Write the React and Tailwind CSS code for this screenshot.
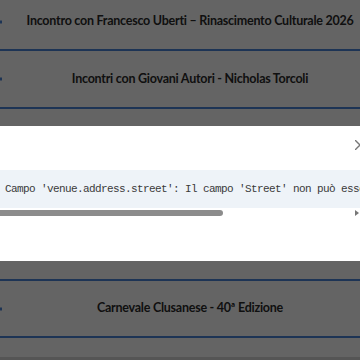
const events = [
  { title: 'Incontro con Francesco Uberti – Rinascimento Culturale 2026', h: 'h-[57px]' },
  { title: 'Incontri con Giovani Autori - Nicholas Torcoli', h: 'h-[58px]' },
  { title: 'Mostra fotografica - Il Lago e la sua Gente', h: 'h-[57px]' },
  { title: 'Concerto di Primavera - Banda Cittadina', h: 'h-[58px]' },
  { title: 'Festa della Sardina - Edizione 2026', h: 'h-[57px]' },
  { title: 'Carnevale Clusanese - 40ª Edizione', h: 'h-[57px]' },
];

function EventRow({ title, h }) {
  return (
    <div className={`relative flex items-center justify-center border-b-2 border-[#4a82d4] pl-[20px] ${h}`}>
      <span className="absolute left-0 top-1/2 h-[3px] w-[2px] -translate-y-1/2 bg-[#4a82d4]"></span>
      <span className="whitespace-nowrap text-[12.5px] font-bold tracking-[-0.25px] text-[#2a2a2a]">{title}</span>
    </div>
  );
}

export default function App() {
  return (
    <div className="relative h-[360px] w-[360px] overflow-hidden bg-[#fafafa]" style={{ fontFamily: 'Lato, "Noto Sans", sans-serif' }}>
      {/* Event list */}
      <div className="-mt-[6px]">
        {events.map((ev) => (
          <EventRow key={ev.title} title={ev.title} h={ev.h} />
        ))}
        <div className="h-[19px]"></div>
        <div className="h-[4px] bg-[#d4d4d4]"></div>
      </div>

      {/* Overlay */}
      <div className="absolute inset-0 bg-black/60"></div>

      {/* Error dialog */}
      <div className="absolute left-0 top-[126px] h-[135px] w-[400px] bg-white">
        <button className="absolute left-[355px] top-[14px] h-[10px] w-[10px] text-[#777]">
          <svg viewBox="0 0 10 10" className="h-[10px] w-[10px]" fill="none" stroke="currentColor" strokeWidth="1.4">
            <path d="M0 0L10 10M0 10L10 0" />
          </svg>
        </button>
        <div className="mt-[44px] flex h-[38px] w-[400px] items-center overflow-hidden bg-[#eef3f8] pl-[5px]">
          <pre className="whitespace-pre text-[11px] tracking-[-0.6px] text-[#3a3a3a]" style={{ fontFamily: '"Liberation Mono", "DejaVu Sans Mono", monospace' }}>
            Campo 'venue.address.street': Il campo 'Street' non può essere vuoto.
          </pre>
        </div>
        <div className="flex h-[9px] w-[360px] items-center justify-between pr-[1px]">
          <div className="h-[6px] w-[223px] rounded-r-full bg-[#8c8c8c]"></div>
          <div className="h-0 w-0 border-y-[3px] border-l-[4px] border-y-transparent border-l-[#777]"></div>
        </div>
      </div>
    </div>
  );
}
